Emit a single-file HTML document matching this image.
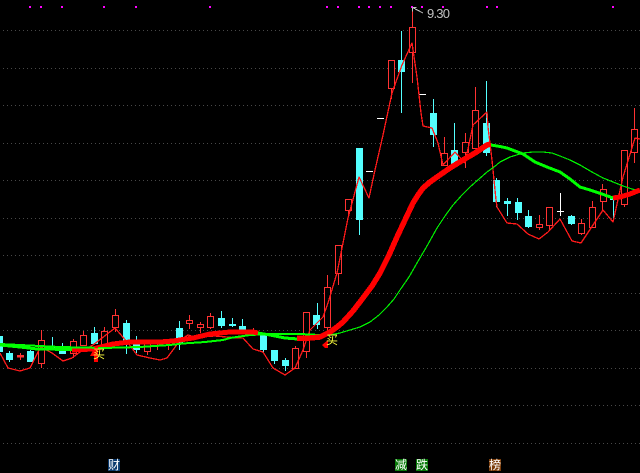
<!DOCTYPE html>
<html><head><meta charset="utf-8"><style>
html,body{margin:0;padding:0;background:#000;width:640px;height:472px;overflow:hidden}
svg{position:absolute;left:0;top:0}
.l{position:absolute;top:459px;width:12px;height:12px;line-height:12px;font:12px/12px "WenQuanYi Zen Hei","Noto Sans CJK SC",sans-serif;color:#fff;text-align:center}
</style></head><body>
<svg width="640" height="472" viewBox="0 0 640 472">
<g stroke="#484848" stroke-width="1" stroke-dasharray="1 3" shape-rendering="crispEdges">
<path d="M3 30.500H640M3 68.500H640M3 105.500H640M3 143.500H640M3 180.500H640M3 218.500H640M3 255.500H640M3 293.500H640M3 330.500H640M3 368.500H640M3 405.500H640M3 443.500H640"/>
</g>
<path fill="#ff00ff" d="M29 6h2v2h-2zM40 6h2v2h-2zM61 6h2v2h-2zM103 6h2v2h-2zM135 6h2v2h-2zM209 6h2v2h-2zM326 6h2v2h-2zM337 6h2v2h-2zM358 6h2v2h-2zM368 6h2v2h-2zM379 6h2v2h-2zM390 6h2v2h-2zM411 6h2v2h-2zM421 6h2v2h-2zM442 6h2v2h-2zM486 6h2v2h-2zM496 6h2v2h-2zM612 6h2v2h-2z"/>
<g shape-rendering="crispEdges">
<path stroke="#54ffff" fill="none" d="M9.500 351V362M30.500 350V362M52.500 337V350M62.500 343V354M94.500 327V344M126.500 320V354M136.500 336V353M179.500 321V350M221.500 311V328M232.500 318V327M242.500 319V332M263.500 335V352M274.500 350V364M285.500 358V371M317.500 303V329M359.500 148V235M401.500 31V113M433.500 99V147M454.500 123V165M486.500 81V156M496.500 178V207M507.500 198V216M517.500 198V220M528.500 210V228M571.500 215V225M613.500 197V220"/>
<path fill="#54ffff" d="M0 336h3v16h-3zM6 353h7v7h-7zM27 351h7v11h-7zM49 347h7v3h-7zM59 347h7v7h-7zM91 333h7v11h-7zM123 323h7v19h-7zM133 342h7v8h-7zM176 328h7v15h-7zM218 318h7v8h-7zM229 324h7v2h-7zM239 326h7v6h-7zM260 335h7v15h-7zM271 350h7v11h-7zM282 360h7v6h-7zM313 315h7v10h-7zM356 148h7v72h-7zM398 60h7v12h-7zM430 113h7v22h-7zM451 150h7v15h-7zM483 123h7v30h-7zM493 180h7v22h-7zM504 201h7v3h-7zM515 202h7v11h-7zM525 216h7v11h-7zM568 216h7v8h-7zM610 197h7v3h-7z"/>
<path stroke="#ff3232" fill="none" d="M20.500 353V360M41.500 330V368M73.500 339V358M83.500 331V345M104.500 327V345M115.500 309V332M147.500 340V355M157.500 340V350M168.500 340V350M189.500 315V329M200.500 322V333M210.500 313V329M253.500 328V336M295.500 346V368M306.500 312V358M327.500 275V336M338.500 245V285M348.500 199V215M391.500 60V99M412.500 8V83M444.500 137V166M465.500 133V168M475.500 87V148M539.500 215V230M549.500 207V230M581.500 219V235M592.500 201V227M602.500 184V211M624.500 150V207M634.500 108V163"/>
<g fill="#000" stroke="#ff3232">
<rect x="17.500" y="355.500" width="6" height="1.500" fill="#ff3232"/>
<rect x="38.500" y="340.500" width="6" height="23"/>
<rect x="70.500" y="341.500" width="6" height="12"/>
<rect x="80.500" y="335.500" width="6" height="10"/>
<rect x="101.500" y="331.500" width="6" height="15"/>
<rect x="112.500" y="315.500" width="6" height="12"/>
<rect x="144.500" y="342.500" width="6" height="9"/>
<rect x="186.500" y="320.500" width="6" height="3"/>
<rect x="197.500" y="324.500" width="6" height="3"/>
<rect x="207.500" y="316.500" width="6" height="11"/>
<rect x="292.500" y="348.500" width="6" height="20"/>
<rect x="303.500" y="312.500" width="6" height="39"/>
<rect x="324.500" y="287.500" width="6" height="40"/>
<rect x="335.500" y="245.500" width="6" height="28"/>
<rect x="345.500" y="199.500" width="6" height="11"/>
<rect x="388.500" y="60.500" width="6" height="28"/>
<rect x="409.500" y="27.500" width="6" height="25"/>
<rect x="441.500" y="153.500" width="6" height="12"/>
<rect x="462.500" y="142.500" width="6" height="10"/>
<rect x="472.500" y="110.500" width="6" height="38"/>
<rect x="536.500" y="224.500" width="6" height="3"/>
<rect x="546.500" y="207.500" width="6" height="18"/>
<rect x="578.500" y="223.500" width="6" height="10"/>
<rect x="589.500" y="207.500" width="6" height="20"/>
<rect x="600.500" y="189.500" width="6" height="12"/>
<rect x="621.500" y="150.500" width="6" height="54"/>
<rect x="631.500" y="129.500" width="6" height="23"/>
</g>
<path stroke="#fff" fill="none" d="M366 171.500h7M377 118.500h7M419 94.500h7M560.500 193V216M557 211.500h7"/>
</g>
<g fill="none" shape-rendering="crispEdges" stroke-linejoin="round">
<!-- thin red -->
<path stroke="#ff1a1a" stroke-width="1.300" d="M0 353L8 368L20 371L30 368L38 352L41 347L52 353L63 361L72 358L80 352L93 345L115 328L128 343L137 355L150 358L160 360L167 358L173 350L180 340L188 335L195 337L215 336L238 338L243 338L253 349L263 352L273 368L285 375L295 368L303 350L310 330L323 317L328 303L337 273L348 218L359 177L369 198L375 170L383 135L392 93L402 65L412 43L417 77L421 113L423 126L432 128L438 143L443 165L455 152L465 163L473 125L487 112L488 127L492 160L496 200L497 207L507 223L517 224L528 234L539 239L548 232L560 219L572 241L581 243L603 210L613 222L623 177L635 138L640 139"/>
<!-- slow green right -->
<path stroke="#00ff00" stroke-width="2" d="M170 345L183 343.500L205 342L223 340L230 338L250 335L273 334L300 334L320 335L330 335"/>
<path stroke="#00ee00" stroke-width="1.200" d="M330 335L340 333L350 330L360 327L370 322L379 315L387 307L394 299L400 290L409 277L417 263L427 246L437 228L445 216L453 205L462 195L470 187L479 179L487 172L494 167L500 162L510 157L523 153L533 152L543 152L552 153L560 156L570 160L580 165L592 172L603 178L613 182L623 186L632 189L640 191"/>
<!-- fast MA segments -->
<path stroke="#00ff00" stroke-width="3" d="M0 345L20 347L37 349L72 349.500"/>
<path stroke="#ff0000" stroke-width="5" d="M72 350L93 349L113 344L130 342L143 342L160 342L173 341L193 338L210 334L230 332L253 332L258 333"/>
<path stroke="#00ff00" stroke-width="3" d="M258 333L270 335L285 338L298 339"/>
<path stroke="#ff0000" stroke-width="5.500" d="M297 338L310 338L320 337L330 332L337 327L343 322L353 311L363 298L372 286L380 273L389 255L397 237L405 220L413 203L418 195L423 188L430 182L437 177L450 168L463 160L475 153L487 145L491 144"/>
<path stroke="#00ff00" stroke-width="3" d="M491 145L500 146.500L507 148L515 151L523 154L529 158L535 162L547 167L560 172L570 179L580 187L590 190L602 194L613 198"/>
<path stroke="#ff0000" stroke-width="5" d="M613 198L620 197L630 194L640 190"/>
<!-- slow green left, over the thick MA -->
<path stroke="#00ff00" stroke-width="2" d="M0 344L60 347L103 348L140 347L170 345"/>
</g>
<path fill="#ff0000" d="M90 356L95 347L98 347L98 362L94 362L94 356zM322 345L328 340L328 348L325 348z"/>
<text x="93" y="358" font-size="12" fill="#ffff40" font-family="'WenQuanYi Zen Hei','Noto Sans CJK SC',sans-serif">买</text>
<text x="326" y="344" font-size="12" fill="#ffff40" font-family="'WenQuanYi Zen Hei','Noto Sans CJK SC',sans-serif">买</text>
<path fill="none" stroke="#c0c0c0" shape-rendering="crispEdges" d="M412.500 7.500L423 13M412.500 7.500h4M412.500 7.500v4"/>
<text x="427" y="18" font-size="13" fill="#c0c0c0" font-family="'Liberation Sans',sans-serif" textLength="23">9.30</text>
</svg>
<div class="l" style="left:108px;background:#0a3a6e">财</div>
<div class="l" style="left:395px;background:#0a7a0a">减</div>
<div class="l" style="left:416px;background:#0a7a0a">跌</div>
<div class="l" style="left:489px;background:#7a3c0a">榜</div>
</body></html>
